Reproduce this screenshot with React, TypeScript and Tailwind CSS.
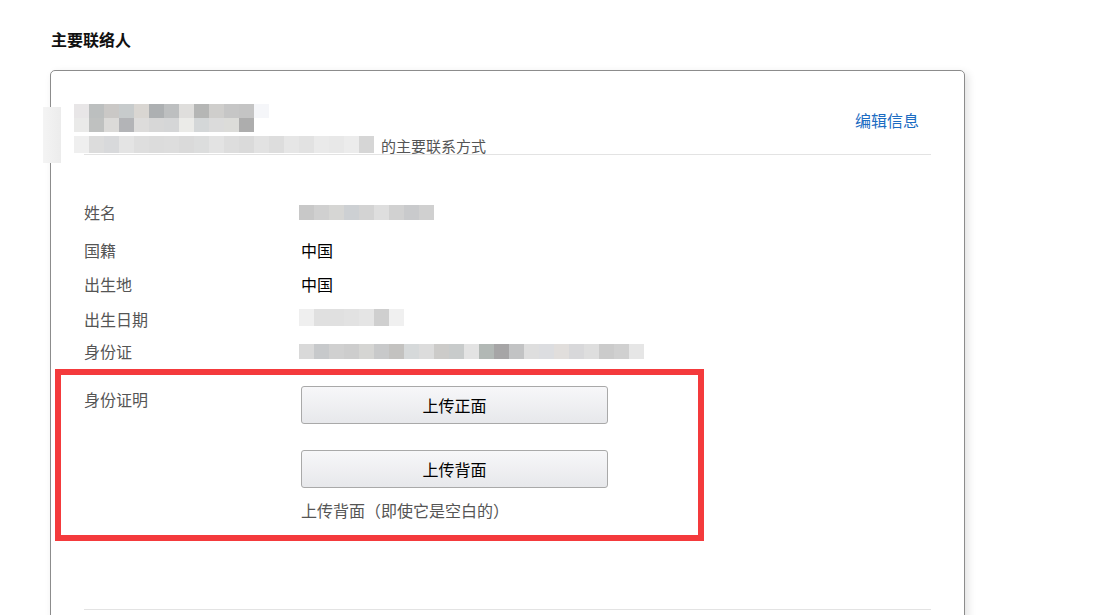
import React from "react";

const font = { fontFamily: '"Noto Sans CJK SC", "Noto Sans", sans-serif' };

// pixelated (redacted) blocks
function Mosaic({ colors, h = "h-[15px]" }: { colors: string[]; h?: string }) {
  return (
    <div className={`flex ${h}`}>
      {colors.map((c, i) => (
        <div key={i} className="w-[15px] h-full" style={{ backgroundColor: c }} />
      ))}
    </div>
  );
}

const nameTop1 = ["#e8e6e7", "#bcbfbf", "#cac8c6", "#c7cbcc", "#d9d6d2", "#adb0b2", "#bdbfc0", "#dfdedc", "#b5b6b5", "#cfcecc", "#c6c6c6", "#c4c4c4", "#f5f6f9"];
const nameTop2 = ["#eaeae9", "#bfc1c0", "#dbdad8", "#b3b4b7", "#dddcdb", "#d7d7d7", "#d5d6d7", "#ebebe8", "#d4d7d8", "#dbdbdb", "#dcdcd9", "#adadad"];
const nameLine = ["#efefef", "#dcdcdc", "#d8d9db", "#e4e4e4", "#dedede", "#dcdcdc", "#dddddd", "#dadada", "#dcdddd", "#e3e3e3", "#dddddd", "#dadada", "#e2e2e2", "#dddddd", "#e6e6e6", "#e2e2e2", "#eaeaea", "#e8e8e8", "#ececec", "#d6d6d6"];
const nameVal = ["#c8c8c8", "#d0d0d0", "#d6d6d4", "#cdd0d3", "#d3d3d3", "#dedede", "#d1d1d1", "#c9cacc", "#d0d0d0"];
const dateVal = ["#efefef", "#e0e0e0", "#e0e0e0", "#e2e2e2", "#e5e5e5", "#cfcfcf", "#f0f0f0"];
const idVal = ["#d9d9d9", "#c7c9cb", "#d0d0d0", "#cdcdcd", "#d5d5d3", "#c8c9ca", "#c3c2c0", "#d6d9da", "#dcdcdc", "#cccbc9", "#c8cbcb", "#e3e3e3", "#b2b8b5", "#a6a5a6", "#c2c3c4", "#dedede", "#dcdde0", "#e1dedc", "#d8d8da", "#dedede", "#cbcbcb", "#d0d0d0", "#e6e6e6"];

function Row({ label, h, children }: { label: string; h: string; children?: React.ReactNode }) {
  return (
    <div className={`flex items-start ${h}`}>
      <div className="w-[217px] text-[16px] leading-[20px] text-[#555]">{label}</div>
      <div className="text-[16px] leading-[20px] text-black">{children}</div>
    </div>
  );
}

function UploadButton({ children }: { children: React.ReactNode }) {
  return (
    <button className="w-[307px] h-[38px] rounded-[3px] border border-[#a9a9a9] bg-gradient-to-b from-[#f7f7f9] to-[#e7e8eb] text-[16px] text-black">
      {children}
    </button>
  );
}

export default function App() {
  return (
    <div className="w-full h-[615px] overflow-hidden bg-white pl-[50px] pt-[30px]" style={font}>
      <h2 className="text-[16px] font-bold leading-[18px] text-[#111] pl-[1px]">主要联络人</h2>

      <div className="relative mt-[22px] w-[915px] h-[700px] rounded-[5px] border border-[#8c8c8c] shadow-[3px_3px_8px_rgba(0,0,0,0.12)] px-[33px] pt-[33px]">
        {/* blurred smear over the left border */}
        <div className="absolute left-[-8px] top-[36px] w-[18px] h-[56px] bg-gradient-to-r from-[#f4f4f4] to-[#ececec]" />

        {/* header */}
        <div className="flex justify-between items-start border-b border-[#e3e3e3] h-[51px]">
          <div className="ml-[-10px]">
            <Mosaic colors={nameTop1} h="h-[14px]" />
            <Mosaic colors={nameTop2} h="h-[14px]" />
            <div className="flex items-center">
              <Mosaic colors={nameLine} h="h-[17px]" />
              <span className="text-[15px] leading-[20px] text-[#555] ml-[7px] mt-[4px]">的主要联系方式</span>
            </div>
          </div>
          <a className="text-[16px] leading-[20px] text-[#1c6cc2] mt-[6px] mr-[12px]">编辑信息</a>
        </div>

        {/* details */}
        <div className="pt-[47px]">
          <Row label="姓名" h="h-[38px]">
            <div className="pt-[3px] ml-[-2px]">
              <Mosaic colors={nameVal} />
            </div>
          </Row>
          <Row label="国籍" h="h-[34px]">中国</Row>
          <Row label="出生地" h="h-[35px]">中国</Row>
          <Row label="出生日期" h="h-[32px]">
            <div className="ml-[-2px]">
              <Mosaic colors={dateVal} h="h-[17px]" />
            </div>
          </Row>
          <Row label="身份证" h="h-[28px]">
            <div className="pt-[3px] ml-[-2px]">
              <Mosaic colors={idVal} />
            </div>
          </Row>

          {/* highlighted upload section */}
          <div className="ml-[-29px] w-[649px] border-[6px] border-[#f43a3c] pl-[23px] pb-[15px]">
            <div className="flex items-start">
              <div className="w-[217px] pt-[14px] text-[16px] leading-[20px] text-[#555]">身份证明</div>
              <div className="pt-[11px] flex flex-col">
                <UploadButton>上传正面</UploadButton>
                <div className="mt-[26px]">
                  <UploadButton>上传背面</UploadButton>
                </div>
                <p className="mt-[12px] text-[16px] leading-[20px] text-[#555]">上传背面（即使它是空白的）</p>
              </div>
            </div>
          </div>

          <div className="mt-[68px] h-px bg-[#e3e3e3]" />
        </div>
      </div>
    </div>
  );
}
